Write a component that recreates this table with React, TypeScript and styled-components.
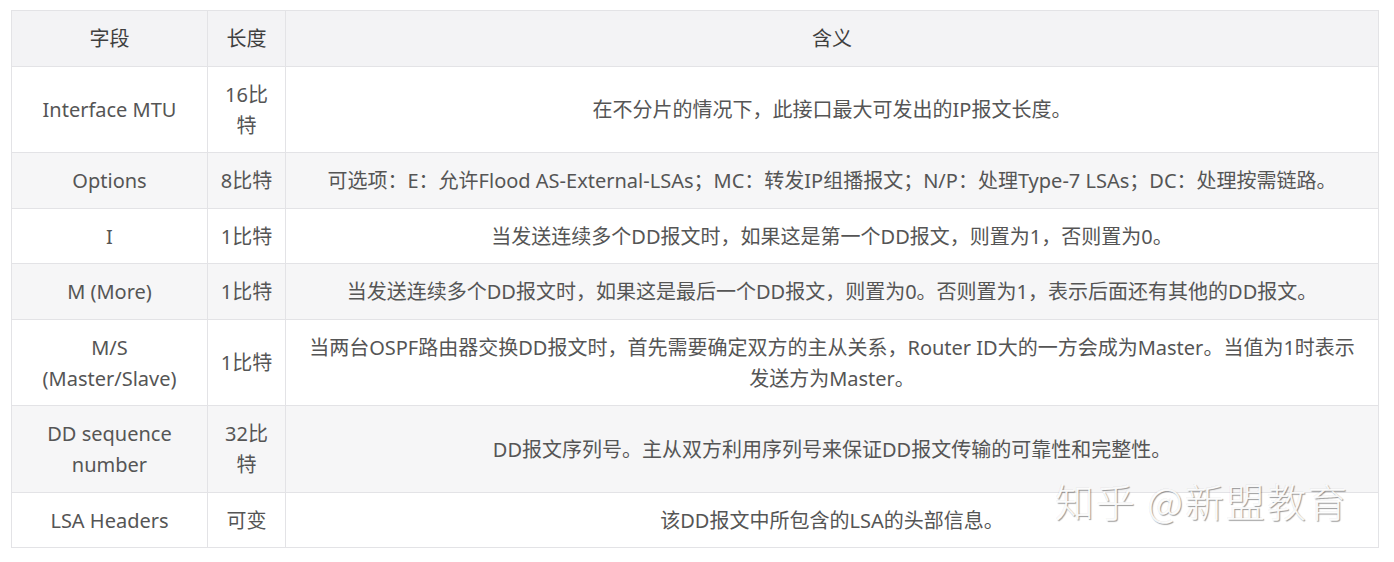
import styled, { createGlobalStyle } from "styled-components";

const GlobalStyle = createGlobalStyle`
    html, body {
        margin: 0;
        padding: 0;
        background: #ffffff;
    }
`;

const Page = styled.div`
    position: relative;
    padding: 10px 0 0 11px;
    width: 1394px;
    height: 562px;
    box-sizing: border-box;
    font-family: "Noto Sans", "Noto Sans CJK SC", sans-serif;
`;

const Table = styled.table`
    width: 1368px;
    border-collapse: collapse;
    table-layout: fixed;
    color: #555555;
    font-size: 20px;
    line-height: 31px;
`;

const Row = styled.tr<{ $shade: boolean }>`
    background-color: ${({ $shade }) => ($shade ? "#f6f6f7" : "#ffffff")};
`;

const HeadCell = styled.th`
    background-color: #f3f3f5;
    font-weight: 400;
    color: #3f3f3f;
    text-align: center;
    padding: 12px 12px 11.5px;
    border: 1px solid #e3e3e6;
`;

const Cell = styled.td`
    text-align: center;
    padding: 12px 12px 11.5px;
    border: 1px solid #e3e3e6;
    word-break: break-all;
`;

const DescCell = styled(Cell)`
    padding-left: 17px;
    padding-right: 17px;
`;

const Watermark = styled.div`
    position: absolute;
    left: 1055px;
    top: 472px;
    font-family: "Noto Sans CJK SC", sans-serif;
    font-size: 39px;
    font-weight: 300;
    letter-spacing: 2px;
    color: rgba(255, 255, 255, 0.92);
    text-shadow: 1px 1px 1px rgba(0, 0, 0, 0.4), -1px -1px 0 rgba(0, 0, 0, 0.05);
    white-space: nowrap;
`;

type Field = {
    name: string[];
    len: string;
    desc: string;
};

const rows: Field[] = [
    { name: ["Interface MTU"], len: "16比特", desc: "在不分片的情况下，此接口最大可发出的IP报文长度。" },
    {
        name: ["Options"],
        len: "8比特",
        desc: "可选项：E：允许Flood AS-External-LSAs；MC：转发IP组播报文；N/P：处理Type-7 LSAs；DC：处理按需链路。",
    },
    { name: ["I"], len: "1比特", desc: "当发送连续多个DD报文时，如果这是第一个DD报文，则置为1，否则置为0。" },
    {
        name: ["M (More)"],
        len: "1比特",
        desc: "当发送连续多个DD报文时，如果这是最后一个DD报文，则置为0。否则置为1，表示后面还有其他的DD报文。",
    },
    {
        name: ["M/S", "(Master/Slave)"],
        len: "1比特",
        desc: "当两台OSPF路由器交换DD报文时，首先需要确定双方的主从关系，Router ID大的一方会成为Master。当值为1时表示发送方为Master。",
    },
    { name: ["DD sequence", "number"], len: "32比特", desc: "DD报文序列号。主从双方利用序列号来保证DD报文传输的可靠性和完整性。" },
    { name: ["LSA Headers"], len: "可变", desc: "该DD报文中所包含的LSA的头部信息。" },
];

export default function App() {
    return (
        <Page>
            <GlobalStyle />
            <Table>
                <colgroup>
                    <col style={{ width: 196 }} />
                    <col style={{ width: 78 }} />
                    <col />
                </colgroup>
                <thead>
                    <tr>
                        <HeadCell>字段</HeadCell>
                        <HeadCell>长度</HeadCell>
                        <HeadCell>含义</HeadCell>
                    </tr>
                </thead>
                <tbody>
                    {rows.map((row, key) => (
                        <Row key={key} $shade={key % 2 === 1}>
                            <Cell>
                                {row.name.map((part, i) => (
                                    <div key={i}>{part}</div>
                                ))}
                            </Cell>
                            <Cell>{row.len}</Cell>
                            <DescCell>{row.desc}</DescCell>
                        </Row>
                    ))}
                </tbody>
            </Table>
            <Watermark>知乎 @新盟教育</Watermark>
        </Page>
    );
}
